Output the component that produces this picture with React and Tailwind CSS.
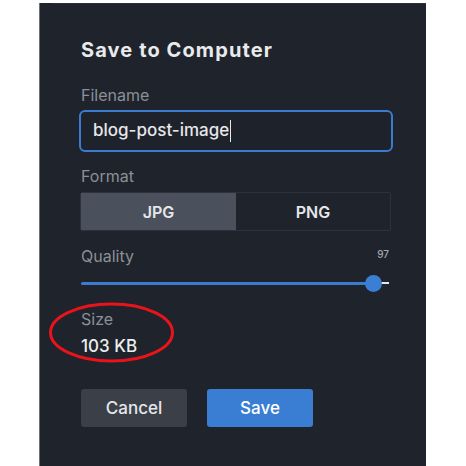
export default function App() {
  const font = { fontFamily: 'Inter, "Open Sans", "Liberation Sans", sans-serif' };
  return (
    <div className="w-[466px] h-[466px] bg-white relative overflow-hidden" style={font}>
      <div className="ml-[39px] w-[387px] h-[466px] bg-[#1f232b] border-l border-[#6b6f77] relative">
        <div className="h-px bg-[#2c3038] ml-[12px] mt-[3px]" />
        <div className="pl-[41px] pr-[32px]">
          <div className="mt-[34px] text-[20px] leading-[24px] font-bold tracking-[1.1px] text-[#e9eaec]">Save to Computer</div>
          <div className="mt-[23px] text-[16px] leading-[20px] text-[#8b9099]">Filename</div>
          <div className="mt-[5px] -ml-[2px] w-[314px] h-[42px] rounded-[6px] border-2 border-[#3b7bd0] bg-[#1e222a] flex items-center pl-[12px]">
            <span className="text-[17px] text-[#e6e7ea] font-medium">blog-post-image</span>
            <span className="w-px h-[22px] bg-[#e6e7ea] ml-px" />
          </div>
          <div className="mt-[14px] text-[16px] leading-[20px] text-[#8b9099]">Format</div>
          <div className="mt-[6px] -ml-px w-[311px] h-[39px] flex rounded-[2px] overflow-hidden border border-[#2e323b]">
            <div className="w-[155px] bg-[#4b515c] flex items-center justify-center text-[16px] font-semibold text-[#e6e7ea]">JPG</div>
            <div className="flex-1 bg-[#1f232b] flex items-center justify-center text-[16px] font-semibold text-[#e6e7ea]">PNG</div>
          </div>
          <div className="mt-[15px] h-[20px] flex items-center justify-between w-[310px]">
            <span className="text-[16px] text-[#8b9099]">Quality</span>
            <span className="text-[10px] text-[#a3a7ae] font-medium -mt-[4px] pr-[2px]">97</span>
          </div>
          <div className="mt-[9px] relative w-[308px] h-[16px]">
            <div className="absolute left-0 top-[7px] w-[292px] h-[3px] bg-[#3b7bd0] rounded-full" />
            <div className="absolute left-[292px] top-[7px] w-[16px] h-[2px] bg-[#e6e7ea]" />
            <div className="absolute left-[284px] top-0 w-[17px] h-[17px] rounded-full bg-[#3b7fd4]" />
          </div>
          <div className="mt-[18px] text-[16px] leading-[20px] text-[#8b9099]">Size</div>
          <div className="mt-[7px] text-[17px] leading-[20px] font-medium text-[#eceef0]">103 KB</div>
          <div className="mt-[33px] flex gap-[20px]">
            <div className="w-[106px] h-[38px] pt-[2px] rounded-[3px] bg-[#3b3f48] flex items-center justify-center text-[17px] font-medium text-[#e6e7ea]">Cancel</div>
            <div className="w-[106px] h-[38px] pt-[2px] rounded-[3px] bg-[#3a7ed4] flex items-center justify-center text-[17px] font-medium text-white">Save</div>
          </div>
        </div>
      </div>
      <svg className="absolute left-0 top-0 pointer-events-none" width="466" height="466">
        <ellipse cx="111.5" cy="332.5" rx="61" ry="28.5" fill="none" stroke="#e8141b" strokeWidth="3" />
      </svg>
    </div>
  );
}
